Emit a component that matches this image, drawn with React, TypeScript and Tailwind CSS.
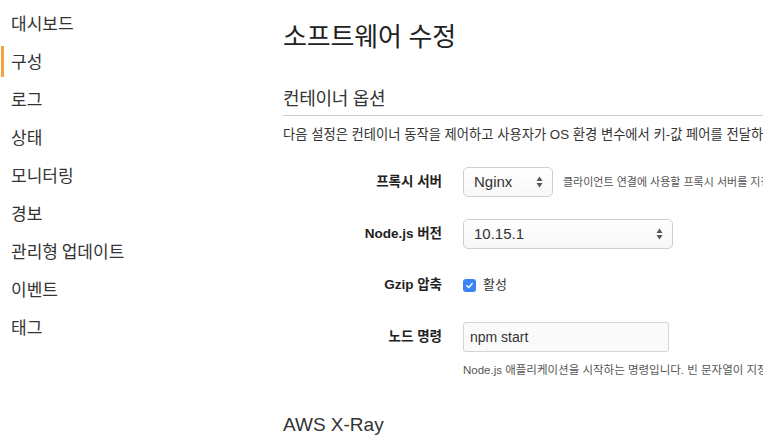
import React from "react";

const navItems = ["대시보드", "구성", "로그", "상태", "모니터링", "경보", "관리형 업데이트", "이벤트", "태그"];

function Arrows() {
  return (
    <svg width="7" height="12" viewBox="0 0 7 12" className="shrink-0">
      <path d="M3.5 0.5 L6.5 5 L0.5 5 Z" fill="#555" />
      <path d="M3.5 11.5 L6.5 7 L0.5 7 Z" fill="#555" />
    </svg>
  );
}

function Select({ value, wide }: { value: string; wide?: boolean }) {
  return (
    <div
      className={`${wide ? "w-[210px]" : "w-[90px]"} shrink-0 h-[30px] flex items-center justify-between pl-[10px] pr-[9px] border border-[#cfcfcf] rounded-[5px] bg-gradient-to-b from-white to-[#f7f7f7] text-[15px] text-[#333]`}
    >
      <span>{value}</span>
      <Arrows />
    </div>
  );
}

function Label({ children }: { children: React.ReactNode }) {
  return (
    <div className="w-[159px] pr-[21px] text-right text-[13.5px] font-bold text-[#222] shrink-0">
      {children}
    </div>
  );
}

export default function App() {
  return (
    <div className="w-[763px] h-[442px] overflow-hidden bg-white flex font-['Liberation_Sans','Noto_Sans_CJK_KR',sans-serif]">
      <nav className="w-[283px] shrink-0 pt-[4px] font-['Noto_Sans_CJK_KR','Liberation_Sans',sans-serif]">
        {navItems.map((item, i) => (
          <div key={item} className="h-[38px] flex items-center">
            <div
              className={`ml-[1px] h-[31px] pl-[7px] border-l-[3px] flex items-center text-[17px] text-[#333] ${
                i === 1 ? "border-[#f0a140]" : "border-transparent"
              }`}
            >
              {item}
            </div>
          </div>
        ))}
      </nav>
      <main className="flex-1 min-w-0 whitespace-nowrap">
        <h1 className="mt-[18px] h-[38px] leading-[38px] text-[26px] text-[#222] tracking-[-0.2px]">
          소프트웨어 수정
        </h1>
        <h2 className="mt-[30px] h-[26px] leading-[26px] text-[18px] text-[#333] tracking-[-0.3px]">
          컨테이너 옵션
        </h2>
        <div className="mt-[3px] h-px bg-[#cccccc] w-[600px]" />
        <p className="mt-[10px] text-[13.3px] leading-[18px] text-[#333]">
          다음 설정은 컨테이너 동작을 제어하고 사용자가 OS 환경 변수에서 키-값 페어를 전달하도록 허용합니다.
        </p>
        <div className="ml-[21px]">
          <div className="mt-[23px] flex items-center h-[30px]">
            <Label>프록시 서버</Label>
            <Select value="Nginx" />
            <span className="ml-[10px] text-[11px] text-[#555]">
              클라이언트 연결에 사용할 프록시 서버를 지정합니다.
            </span>
          </div>
          <div className="mt-[22px] flex items-center h-[30px]">
            <Label>Node.js 버전</Label>
            <Select value="10.15.1" wide />
          </div>
          <div className="mt-[21px] flex items-center h-[30px]">
            <Label>Gzip 압축</Label>
            <div className="w-[13px] h-[13px] shrink-0 rounded-[3px] bg-[#3b82f6] flex items-center justify-center">
              <svg width="9" height="9" viewBox="0 0 10 10">
                <path d="M2 5.2 L4.2 7.3 L8 2.8" fill="none" stroke="white" strokeWidth="1.6" strokeLinecap="round" strokeLinejoin="round" />
              </svg>
            </div>
            <span className="ml-[7px] text-[13px] text-[#333]">활성</span>
          </div>
          <div className="mt-[22px] flex items-center h-[30px]">
            <Label>노드 명령</Label>
            <div className="w-[206px] shrink-0 h-[30px] flex items-center px-[6px] border border-[#d4d4d4] rounded-[3px] bg-[#fafafa] text-[14px] text-[#333]">
              npm start
            </div>
          </div>
          <div className="mt-[10px] ml-[159px] text-[11.5px] leading-[16px] text-[#555]">
            Node.js 애플리케이션을 시작하는 명령입니다. 빈 문자열이 지정되면 app.js가 사용됩니다.
          </div>
        </div>
        <h2 className="mt-[35px] text-[19px] leading-[24px] text-[#333]">AWS X-Ray</h2>
      </main>
    </div>
  );
}
